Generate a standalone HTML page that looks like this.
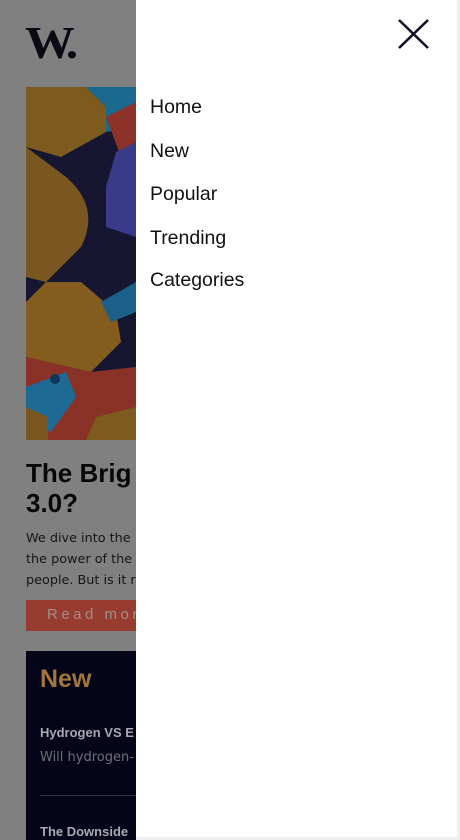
<!DOCTYPE html>
<html><head><meta charset="utf-8"><style>
*{margin:0;padding:0;box-sizing:border-box}
body{width:460px;height:840px;overflow:hidden;background:#808080;font-family:"Liberation Sans",sans-serif;position:relative}
.logo{position:absolute;left:25px;top:20px;font-family:"Liberation Serif",serif;font-weight:bold;font-size:46px;color:#0a0a14;letter-spacing:-4px;line-height:1;transform:scaleX(1.08);transform-origin:left}
.img{position:absolute;left:26px;top:87px;width:110px;height:353px;overflow:hidden;background:#1a1a2e}
.h{position:absolute;left:26px;top:458px;font-size:26px;font-weight:bold;color:#070707;line-height:30px}
.p{position:absolute;left:26px;top:528px;font-family:"DejaVu Sans",sans-serif;font-size:12.8px;color:#151515;line-height:21px;white-space:nowrap}
.btn{position:absolute;left:26px;top:600px;width:110px;height:31px;background:#983c30;color:#a09088;font-size:15px;letter-spacing:3.5px;padding:6px 0 0 21px;white-space:nowrap;overflow:hidden}
.dark{position:absolute;left:26px;top:651px;width:110px;height:189px;background:#05051a;overflow:hidden}
.new{position:absolute;left:14px;top:14px;font-size:25px;font-weight:bold;color:#a0763a}
.t1{position:absolute;left:14px;top:74px;font-size:13px;font-weight:bold;color:#a8a8b0;white-space:nowrap}
.t2{position:absolute;left:14px;top:99px;font-family:"DejaVu Sans",sans-serif;font-size:13px;color:#707078;white-space:nowrap}
.ln{position:absolute;left:14px;top:144px;width:100px;height:1px;background:#303040}
.t3{position:absolute;left:14px;top:173px;font-size:13px;font-weight:bold;color:#a8a8b0;white-space:nowrap}
.panel{position:absolute;left:136px;top:0;width:321px;height:837px;background:#fff}
.nav{position:absolute;left:14px;font-size:19.5px;color:#111}
.sb{position:absolute;left:457px;top:0;width:3px;height:840px;background:#f0f0f0}
.bb{position:absolute;left:136px;top:837px;width:324px;height:3px;background:#f0f0f0}
</style></head><body>
<div class="logo">W.</div>
<div class="img"><svg width="110" height="353" viewBox="0 0 110 353">
<rect width="110" height="353" fill="#161630"/>
<polygon points="0,0 60,0 80,20 80,45 35,70 0,60" fill="#7d5a1e"/>
<polygon points="60,0 110,0 110,40 80,45 80,20" fill="#1a6a90"/>
<polygon points="80,30 110,15 110,60 95,70" fill="#8c3228"/>
<polygon points="90,65 110,55 110,150 80,140 80,100" fill="#3a3a8a"/>
<path d="M0,60 L40,90 Q75,120 55,160 L20,195 L0,190Z" fill="#7a5620"/>
<polygon points="20,195 55,195 90,225 95,255 65,285 0,270 0,215" fill="#835c1e"/>
<polygon points="75,215 110,195 110,225 85,235" fill="#1c5f88"/>
<polygon points="0,270 65,285 110,280 110,353 0,353" fill="#8a3228"/>
<polygon points="0,300 40,285 50,310 25,345 0,330" fill="#1d6a95"/>
<circle cx="29" cy="292" r="5" fill="#0b3858"/>
<polygon points="0,320 22,330 22,353 0,353" fill="#7a5620"/>
<polygon points="70,330 110,320 110,353 60,353" fill="#7d5a1e"/>
</svg></div>
<div class="h">The Brig<br>3.0?</div>
<div class="p">We dive into the<br>the power of the<br>people. But is it r</div>
<div class="btn">Read more</div>
<div class="dark"><div class="new">New</div><div class="t1">Hydrogen VS E</div><div class="t2">Will hydrogen-</div><div class="ln"></div><div class="t3">The Downside</div></div>
<div class="panel">
<svg style="position:absolute;left:260px;top:18px" width="34" height="32"><path d="M3,2 L32,30 M32,2 L3,30" stroke="#0f0f23" stroke-width="2.6"/></svg>
<div class="nav" style="top:96px">Home</div>
<div class="nav" style="top:140px">New</div>
<div class="nav" style="top:183px">Popular</div>
<div class="nav" style="top:227px">Trending</div>
<div class="nav" style="top:269px">Categories</div>
</div>
<div class="sb"></div><div class="bb"></div>
</body></html>
